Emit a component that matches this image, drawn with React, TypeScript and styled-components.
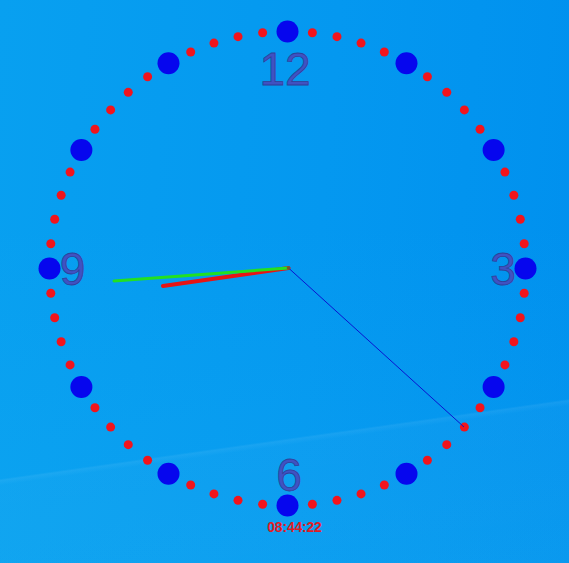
import styled, { createGlobalStyle } from 'styled-components'

const GlobalStyle = createGlobalStyle`
    html, body {
        margin: 0;
        padding: 0;
        overflow: hidden;
    }
`

const CX = 287.5
const CY = 268.5
const RX = 238
const RY = 237

interface Numeral {
    label: string;
    x: number;
    y: number;
}

const numerals: Numeral[] = [
    { label: '12', x: 285, y: 85 },
    { label: '3', x: 503, y: 285 },
    { label: '6', x: 289, y: 491 },
    { label: '9', x: 72.5, y: 285 },
]

const Desktop = styled.main`
    display: flex;
    flex-direction: column;
    align-items: flex-start;
    width: 100vw;
    height: 100vh;
    background:
        linear-gradient(172deg, transparent 74.45%, rgba(255, 255, 255, 0.07) 74.75%, rgba(255, 255, 255, 0.025) 75.5%, rgba(255, 255, 255, 0.015) 100%),
        linear-gradient(180deg, rgba(30, 190, 250, 0) 40%, rgba(30, 180, 240, 0.2) 100%),
        linear-gradient(95deg, #08a0f0 0%, #0498f0 55%, #0090ee 100%);
`

const Face = styled.svg`
    display: block;
    width: 569px;
    height: 518px;
`

const Numeral = styled.text`
    font-family: "Liberation Sans", Arial, sans-serif;
    font-size: 46px;
    fill: #4052c2;
    stroke: #30409a;
    stroke-width: 0.8px;
    text-anchor: middle;
`

const TimeLabel = styled.div`
    width: 569px;
    box-sizing: border-box;
    padding-left: 20px;
    margin-top: 2px;
    text-align: center;
    font-family: "Liberation Sans", Arial, sans-serif;
    font-weight: bold;
    font-size: 14px;
    line-height: 14px;
    letter-spacing: -0.2px;
    color: #e01c24;
`

const Ticks = () => (
    <g>
        {Array.from({ length: 60 }, (_, i) => {
            const a = (i * 6 * Math.PI) / 180
            const major = i % 5 === 0
            return (
                <circle
                    key={`tick_${i}`}
                    cx={CX + RX * Math.sin(a)}
                    cy={CY - RY * Math.cos(a)}
                    r={major ? 11 : 4.5}
                    fill={major ? '#0606ee' : '#f2141c'}
                />
            )
        })}
    </g>
)

export default function App() {
    return (
        <Desktop>
            <GlobalStyle />
            <Face viewBox="0 0 569 518">
                <Ticks />
                {numerals.map((n) => (
                    <Numeral key={`num_${n.label}`} x={n.x} y={n.y}>{n.label}</Numeral>
                ))}
                <line x1={288.5} y1={268} x2={163} y2={286} stroke="#e81414" strokeWidth={4} strokeLinecap="round" />
                <line x1={288.5} y1={268} x2={114} y2={281} stroke="#22e022" strokeWidth={3} strokeLinecap="round" />
                <line x1={288.5} y1={268} x2={464} y2={427} stroke="#0a14d0" strokeWidth={1} />
                <circle cx={288.5} cy={268} r={1.8} fill="#7a5030" />
            </Face>
            <TimeLabel>08:44:22</TimeLabel>
        </Desktop>
    )
}
